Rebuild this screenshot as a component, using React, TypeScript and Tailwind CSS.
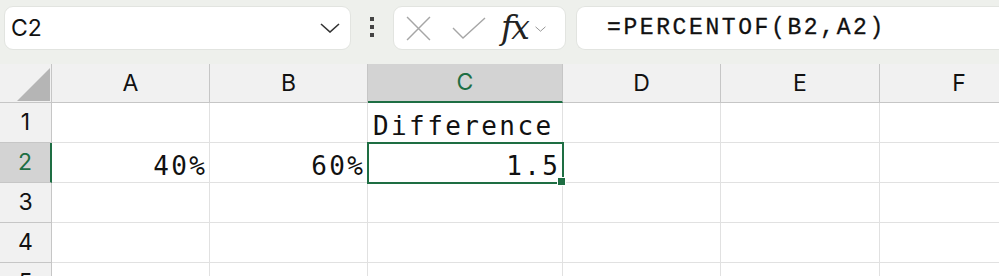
const cols = [
  { key: "A", w: "w-[158px]" },
  { key: "B", w: "w-[158px]" },
  { key: "C", w: "w-[195px]" },
  { key: "D", w: "w-[158px]" },
  { key: "E", w: "w-[159px]" },
  { key: "F", w: "w-[159px]" },
]

const cells: Record<string, { text: string; align: "left" | "right" }> = {
  C1: { text: "Difference", align: "left" },
  A2: { text: "40%", align: "right" },
  B2: { text: "60%", align: "right" },
  C2: { text: "1.5", align: "right" },
}

const sans = "font-['Inter','Noto_Sans',sans-serif]"
const mono = "font-['DejaVu_Sans_Mono',monospace]"

function Chevron({ className }: { className: string }) {
  return (
    <svg viewBox="0 0 20 10" className={className} fill="none" stroke="currentColor" strokeWidth="1.6">
      <path d="M1 1 L10 9 L19 1" />
    </svg>
  )
}

function Toolbar() {
  return (
    <div className="flex h-[64px] items-start bg-[#eef0ec] pt-[6px]">
      <div className="ml-[4px] flex h-[44px] w-[347px] items-center justify-between rounded-[9px] border border-[#e2e4e0] bg-white pl-[6px] pr-[10px]">
        <span className={`${sans} text-[23px] text-[#111]`}>C2</span>
        <Chevron className="h-[10px] w-[20px] text-[#333]" />
      </div>
      <div className="flex w-[42px] flex-col items-center gap-[4px] pt-[11px]">
        <span className="h-[4px] w-[4px] bg-[#444]" />
        <span className="h-[4px] w-[4px] bg-[#444]" />
        <span className="h-[4px] w-[4px] bg-[#444]" />
      </div>
      <div className="flex h-[44px] w-[173px] items-center rounded-[9px] border border-[#e2e4e0] bg-white">
        <svg viewBox="0 0 24 24" className="ml-[12px] h-[25px] w-[25px] text-[#a6a6a6]" fill="none" stroke="currentColor" strokeWidth="1.4">
          <path d="M1 1 L23 23 M23 1 L1 23" />
        </svg>
        <svg viewBox="0 0 34 22" className="ml-[21px] h-[22px] w-[34px] text-[#a6a6a6]" fill="none" stroke="currentColor" strokeWidth="1.4">
          <path d="M1 11 L11 21 L33 1" />
        </svg>
        <span className="ml-[15px] mt-[-1px] font-['DejaVu_Serif','Liberation_Serif',serif] text-[33px] italic leading-none text-[#222] tracking-[-2px]">
          fx
        </span>
        <Chevron className="ml-[7px] mt-[2px] h-[6px] w-[11px] text-[#888]" />
      </div>
      <div className="ml-[10px] flex h-[44px] flex-1 items-center rounded-l-[9px] border border-r-0 border-[#e2e4e0] bg-white pl-[30px]">
        <span className="font-['Liberation_Mono',monospace] text-[23px] tracking-[2.6px] text-[#111] [-webkit-text-stroke:0.3px_#111]">=PERCENTOF(B2,A2)</span>
      </div>
    </div>
  )
}

function HeaderRow() {
  return (
    <div className="flex h-[39px] bg-[#f1f1f1]">
      <div className="relative w-[52px] shrink-0 border-r border-b border-[#c6c6c6]">
        <svg viewBox="0 0 34 33" className="absolute left-[17px] top-[4px] h-[33px] w-[34px]">
          <path d="M33 0 L33 33 L0 33 Z" fill="#b5b5b5" />
        </svg>
      </div>
      {cols.map((c) =>
        c.key === "C" ? (
          <div
            key={c.key}
            className={`${c.w} flex shrink-0 items-center justify-center border-r border-b-2 border-r-[#c6c6c6] border-b-[#1e6e43] bg-[#d3d3d3] ${sans} text-[23px] text-[#1e6e43]`}
          >
            {c.key}
          </div>
        ) : (
          <div
            key={c.key}
            className={`${c.w} flex shrink-0 items-center justify-center border-r border-b border-[#c6c6c6] ${sans} text-[23px] text-[#111]`}
          >
            {c.key}
          </div>
        )
      )}
    </div>
  )
}

function Row({ n }: { n: number }) {
  const active = n === 2
  return (
    <div className="flex h-[40px]">
      <div
        className={
          active
            ? `flex w-[52px] shrink-0 items-center justify-center border-r-2 border-b border-r-[#1e6e43] border-b-[#c6c6c6] bg-[#d3d3d3] ${sans} text-[23px] text-[#1e6e43]`
            : `flex w-[52px] shrink-0 items-center justify-center border-r border-b border-[#c6c6c6] bg-[#f1f1f1] ${sans} text-[23px] text-[#111]`
        }
      >
        {n}
      </div>
      {cols.map((c) => {
        const id = `${c.key}${n}`
        const cell = cells[id]
        const selected = id === "C2"
        return (
          <div
            key={id}
            className={`${c.w} relative flex shrink-0 items-center border-r border-b border-[#e1e1e1] pt-[6px] ${
              cell?.align === "right" ? "justify-end pr-[4px]" : "justify-start pl-[5px]"
            }`}
          >
            {cell && (
              <span className={`${mono} text-[26px] leading-none tracking-[2.4px] text-[#111] ${cell.align === "right" ? "mr-[-2.4px]" : ""}`}>
                {cell.text}
              </span>
            )}
            {selected && (
              <>
                <div className="absolute left-[-1px] top-[-1px] z-10 h-[42px] w-[197px] border-2 border-[#1e6e43]" />
                <div className="absolute right-[-4px] bottom-[-4px] z-20 h-[9px] w-[9px] border border-white bg-[#1e6e43]" />
              </>
            )}
          </div>
        )
      })}
    </div>
  )
}

export default function App() {
  return (
    <main className="h-[276px] w-[999px] overflow-hidden bg-white">
      <Toolbar />
      <HeaderRow />
      {[1, 2, 3, 4, 5].map((n) => (
        <Row key={n} n={n} />
      ))}
    </main>
  )
}
